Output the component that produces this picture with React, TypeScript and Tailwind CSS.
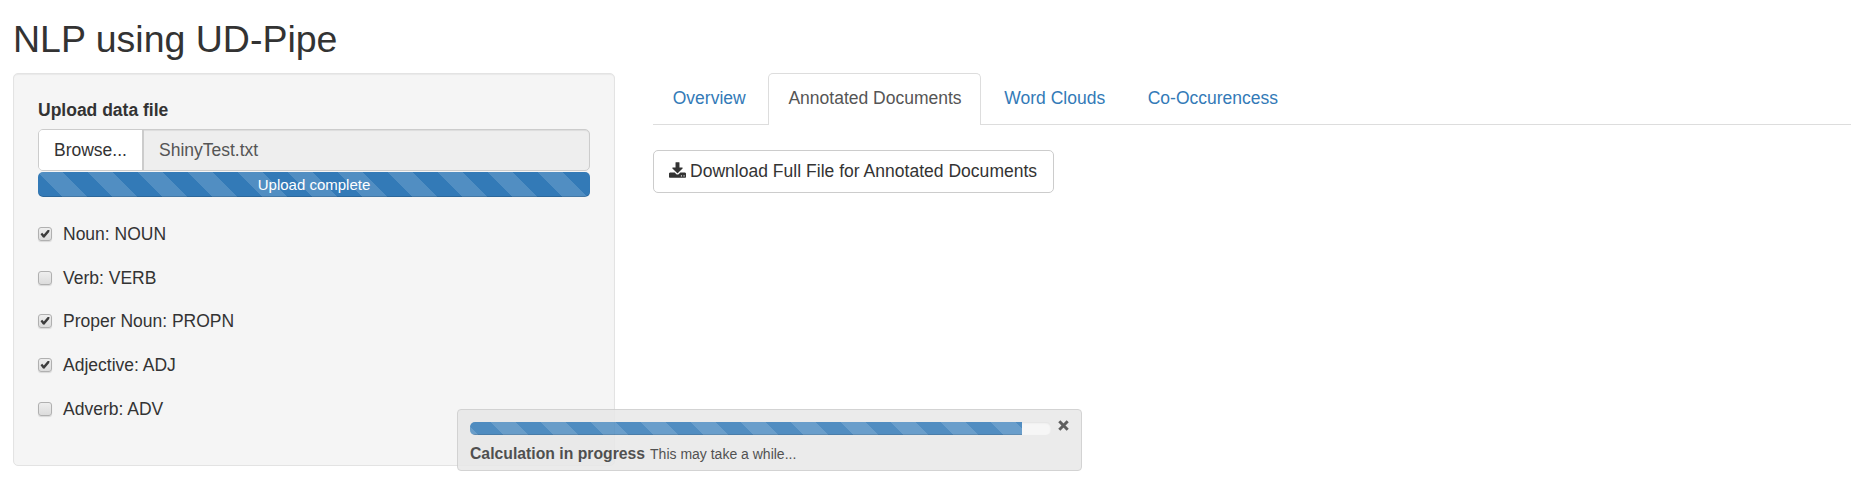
import React from 'react';

const stripes =
  'bg-[linear-gradient(45deg,rgba(255,255,255,0.15)_25%,transparent_25%,transparent_50%,rgba(255,255,255,0.15)_50%,rgba(255,255,255,0.15)_75%,transparent_75%,transparent)] bg-[length:50px_50px]';

const tags = [
  { label: 'Noun: NOUN', checked: true },
  { label: 'Verb: VERB', checked: false },
  { label: 'Proper Noun: PROPN', checked: true },
  { label: 'Adjective: ADJ', checked: true },
  { label: 'Adverb: ADV', checked: false },
];

function TagCheckbox({ label, checked }: { label: string; checked: boolean }) {
  return (
    <label className="flex h-[25px] items-center">
      <span
        role="checkbox"
        aria-checked={checked}
        className="mb-px flex size-[14px] items-center justify-center rounded-[3px] border border-[#b0b0b0] bg-linear-to-b from-[#eeeeee] to-[#dcdcdc] shadow-[0_1px_1px_rgba(0,0,0,0.12)]"
      >
        {checked && (
          <svg viewBox="1 1 12 12" className="size-3" fill="#3c3c3c">
            <path d="M2.5 7.2 L4.2 5.7 L5.8 7.4 L9.7 2.9 L11.5 3.1 L11.2 4.9 L6.3 10.8 L5 10.6 Z" />
          </svg>
        )}
      </span>
      <span className="ml-[11px]">{label}</span>
    </label>
  );
}

function Tab({ label }: { label: string }) {
  return (
    <a className="mr-[3px] border border-transparent px-[18.75px] py-[11.5px] text-[#337ab7]">{label}</a>
  );
}

export default function App() {
  return (
    <div className="relative h-[490px] w-full overflow-hidden bg-white px-[13px] pt-[19px] font-['Liberation_Sans',Arial,sans-serif] text-[17.5px] leading-[25px] text-[#333]">
      <h2 className="mb-[13px] text-[37.5px] leading-[41px]">NLP using UD-Pipe</h2>
      <div className="flex items-start">
        <aside className="h-[393px] w-[602px] shrink-0 rounded-[5px] border border-[#e3e3e3] bg-[#f5f5f5] px-6 pt-6 shadow-[inset_0_1px_1px_rgba(0,0,0,0.05)]">
          <div className="mb-[6px] font-bold">Upload data file</div>
          <div className="flex h-[42px] rounded-[5px] border border-[#ccc] bg-[#eee] shadow-[inset_0_1px_1px_rgba(0,0,0,0.075)]">
            <span className="flex w-[105px] items-center rounded-l-[4px] border-r-2 border-[#ccc] bg-white pl-[15px]">
              Browse...
            </span>
            <span className="flex items-center pl-[15px] text-[#555]">ShinyTest.txt</span>
          </div>
          <div
            className={`mt-px h-[25px] rounded-[5px] bg-[#337ab7] text-center text-[15px] leading-[25px] text-white shadow-[inset_0_-1px_0_rgba(0,0,0,0.15)] ${stripes}`}
          >
            Upload complete
          </div>
          <div className="mt-[24.75px] flex flex-col gap-[18.75px]">
            {tags.map((t) => (
              <TagCheckbox key={t.label} {...t} />
            ))}
          </div>
        </aside>
        <main className="ml-[38px] -mr-[13px] min-w-0 flex-1">
          <nav className="flex h-[52px] border-b border-[#ddd]">
            <Tab label="Overview" />
            <a className="mr-[3.75px] h-[52px] rounded-t-[5px] border border-b-0 border-[#ddd] bg-white pl-[19px] pr-[18.25px] py-[11.5px] text-[#555]">
              Annotated Documents
            </a>
            <Tab label="Word Clouds" />
            <Tab label="Co-Occurencess" />
          </nav>
          <button className="mt-[25px] flex h-[43px] w-[401px] items-center whitespace-nowrap rounded-[5px] border border-[#ccc] bg-white pb-px pl-[15px] tracking-[0.02px]">
            <svg viewBox="0 0 1664 1536" className="mr-1 mb-[3px] h-[16px] w-[17px] shrink-0" fill="#333">
              <path d="M1280 1344q0-26-19-45t-45-19-45 19-19 45 19 45 45 19 45-19 19-45zm256 0q0-26-19-45t-45-19-45 19-19 45 19 45 45 19 45-19 19-45zm128-224v320q0 40-28 68t-68 28H96q-40 0-68-28t-28-68v-320q0-40 28-68t68-28h465l135 136q58 56 136 56t136-56l136-136h464q40 0 68 28t28 68zm-325-569q17 41-14 70l-448 448q-18 19-45 19t-45-19L339 621q-31-29-14-70 17-39 59-39h256V64q0-26 19-45t45-19h256q26 0 45 19t19 45v448h256q42 0 59 39z" />
            </svg>
            Download Full File for Annotated Documents
          </button>
        </main>
      </div>
      <div className="absolute left-[457px] top-[409px] h-[62px] w-[625px] rounded-[4px] border border-[#ccc] bg-[#e8e8e8] pl-3 pt-3 opacity-85">
        <div className="flex h-[13px] items-start">
          <div className="h-[13px] w-[581px] overflow-hidden rounded-[5px] bg-[#f5f5f5] shadow-[inset_0_1px_2px_rgba(0,0,0,0.1)]">
            <div
              className="h-full w-[552px] bg-[#337ab7] bg-[linear-gradient(45deg,transparent_25%,rgba(255,255,255,0.15)_25%,rgba(255,255,255,0.15)_50%,transparent_50%,transparent_75%,rgba(255,255,255,0.15)_75%)] bg-[length:50px_50px] bg-position-[-4px_0px] shadow-[inset_0_-1px_0_rgba(0,0,0,0.15)]"
            />
          </div>
          <svg viewBox="0 0 11 11" className="ml-[7px] -mt-[2px] size-[11px]" stroke="#444" strokeWidth="3">
            <path d="M1.3 1.3 L9.7 9.7 M9.7 1.3 L1.3 9.7" />
          </svg>
        </div>
        <div className="mt-[6px] flex items-baseline leading-[25px]">
          <span className="text-[15.75px] font-bold">Calculation in progress</span>
          <span className="ml-[5px] text-[14px]">This may take a while...</span>
        </div>
      </div>
    </div>
  );
}
